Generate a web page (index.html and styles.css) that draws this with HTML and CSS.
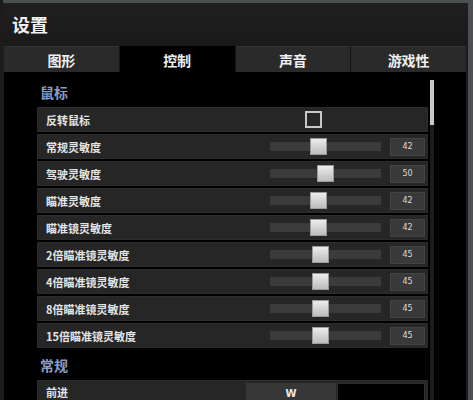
FILE: index.html
```html
<!DOCTYPE html>
<html lang="zh-CN">
<head>
<meta charset="utf-8">
<title>设置</title>
<link rel="stylesheet" href="styles.css">
</head>
<body>
<div class="window">
  <div class="header"><h1 class="title">设置</h1></div>
  <nav class="tabs">
    <div class="tab">图形</div>
    <div class="tab active">控制</div>
    <div class="tab">声音</div>
    <div class="tab">游戏性</div>
  </nav>
  <div class="content">
    <div class="list">
      <div class="section">鼠标</div>
      <div class="row"><span class="label">反转鼠标</span><span class="checkbox"></span></div>
      <div class="row"><span class="label">常规灵敏度</span><span class="track"><span class="thumb" style="left:39.5px"></span></span><span class="value">42</span></div>
      <div class="row"><span class="label">驾驶灵敏度</span><span class="track"><span class="thumb" style="left:47px"></span></span><span class="value">50</span></div>
      <div class="row"><span class="label">瞄准灵敏度</span><span class="track"><span class="thumb" style="left:39.5px"></span></span><span class="value">42</span></div>
      <div class="row"><span class="label">瞄准镜灵敏度</span><span class="track"><span class="thumb" style="left:39.5px"></span></span><span class="value">42</span></div>
      <div class="row"><span class="label">2倍瞄准镜灵敏度</span><span class="track"><span class="thumb" style="left:42.3px"></span></span><span class="value">45</span></div>
      <div class="row"><span class="label">4倍瞄准镜灵敏度</span><span class="track"><span class="thumb" style="left:42.3px"></span></span><span class="value">45</span></div>
      <div class="row"><span class="label">8倍瞄准镜灵敏度</span><span class="track"><span class="thumb" style="left:42.3px"></span></span><span class="value">45</span></div>
      <div class="row"><span class="label">15倍瞄准镜灵敏度</span><span class="track"><span class="thumb" style="left:42.3px"></span></span><span class="value">45</span></div>
      <div class="section section-2">常规</div>
      <div class="row key-row"><span class="label">前进</span><span class="key">W</span><span class="key key-empty"></span></div>
    </div>
    <div class="scrollbar"><div class="scroll-thumb"></div></div>
  </div>
</div>
</body>
</html>
```

FILE: styles.css
```css
* { box-sizing: border-box; margin: 0; padding: 0; }
html, body { height: 100%; overflow: hidden; }
body {
  background: linear-gradient(to right, #1e1c1a 0 3px, #4b5052 3px);
  font-family: "Noto Sans CJK SC", "Noto Sans", sans-serif;
  color: #e8e8e8;
}
.window {
  margin: 3px 0 0 3px;
  width: 465px;
  height: 397px;
  background: #1c1c1c;
  display: flex;
  flex-direction: column;
  overflow: hidden;
}
.header {
  flex-shrink: 0;
  height: 43px;
  padding-left: 9px;
  display: flex;
  align-items: center;
  background: linear-gradient(#1f1f1f, #1a1a1a);
}
.title {
  font-size: 18px;
  font-weight: 700;
  color: #f2f2f2;
  line-height: 1;
  margin-top: -2px;
}
.tabs {
  flex-shrink: 0;
  display: flex;
  height: 26px;
  margin: 0 2px 0 1px;
  gap: 1px;
  background: #151515;
}
.tab {
  flex: 1;
  background: #2a2a2a;
  border-top: 1px solid #333;
  display: flex;
  align-items: center;
  justify-content: center;
  font-size: 14px;
  font-weight: 700;
  color: #f0f0f0;
}
.tab.active { background: #000; border-top-color: #000; }
.content {
  flex: 1;
  min-height: 0;
  overflow: hidden;
  margin: 0 2px 0 1px;
  background: #000;
  display: flex;
  align-items: flex-start;
  padding-left: 33px;
}
.list { width: 391px; flex-shrink: 0; }
.section {
  font-size: 14px;
  font-weight: 700;
  line-height: 16px;
  color: #8a9cc2;
  padding: 12px 0 7px 3px;
}
.section-2 { padding: 7px 0 7px 3px; }
.row {
  height: 25px;
  margin-bottom: 2px;
  background: #262626;
  border: 1px solid #2c2c2c;
  display: flex;
  align-items: center;
  padding-right: 2px;
}
.label {
  flex: 1;
  padding-left: 8px;
  font-size: 11px;
  font-weight: 700;
  color: #e4e4e4;
}
.checkbox {
  width: 17px;
  height: 17px;
  border: 2px solid #c8c8c8;
  margin-right: 103px;
}
.track {
  position: relative;
  width: 111px;
  height: 9px;
  background: #3b3b3b;
  margin-right: 9px;
}
.thumb {
  position: absolute;
  top: -4px;
  width: 17px;
  height: 17px;
  background: linear-gradient(#ececec, #bdbdbd);
  border: 1px solid #9a9a9a;
}
.value {
  width: 35px;
  height: 18px;
  background: #393939;
  border: 1px solid #434343;
  font-family: "DejaVu Sans", sans-serif;
  font-size: 8px;
  color: #dcdcdc;
  display: flex;
  align-items: center;
  justify-content: center;
}
.key-row { height: 24px; align-items: stretch; padding-right: 2px; }
.key-row .label { display: flex; align-items: center; }
.key {
  width: 90px;
  background: #373737;
  margin-top: 2px;
  font-family: "DejaVu Sans", sans-serif;
  font-size: 10px;
  font-weight: 700;
  display: flex;
  align-items: center;
  justify-content: center;
  color: #e8e8e8;
}
.key-empty { width: 88px; margin-left: 1px; background: #000; border: 1px solid #2e2e2e; border-bottom: none; }
.scrollbar {
  width: 4px;
  height: 330px;
  margin: 8px 0 0 2px;
  background: #1c1c1c;
}
.scroll-thumb {
  height: 45px;
  background: #c9c9c9;
}
```
